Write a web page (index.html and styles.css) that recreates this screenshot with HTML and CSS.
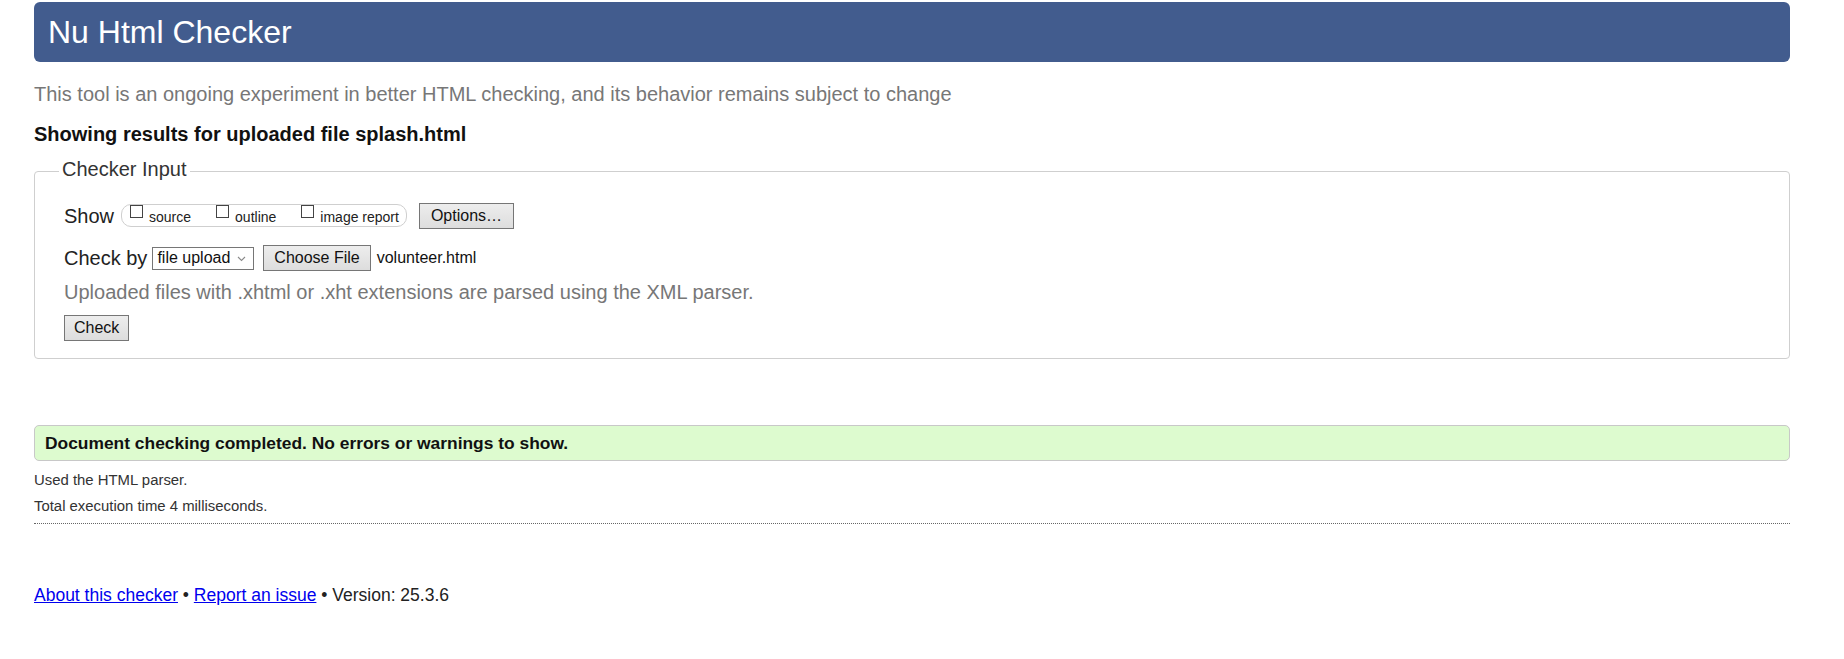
FILE: index.html
```html
<!DOCTYPE html>
<html lang="en">
<head>
<meta charset="utf-8">
<title>Nu Html Checker</title>
<link rel="stylesheet" href="styles.css">
</head>
<body>
<div class="page">
  <header class="banner"><h1>Nu Html Checker</h1></header>
  <p class="intro">This tool is an ongoing experiment in better HTML checking, and its behavior remains subject to change</p>
  <p class="showing">Showing results for uploaded file splash.html</p>

  <section class="panel">
    <span class="panel-title">Checker Input</span>
    <div class="row row-show">
      <span class="label">Show</span>
      <span class="show-box">
        <span class="opt"><span class="cb"></span>source</span>
        <span class="opt"><span class="cb"></span>outline</span>
        <span class="opt last"><span class="cb"></span>image report</span>
      </span>
      <span class="btn btn-options">Options…</span>
    </div>
    <div class="row row-check">
      <span class="label">Check by</span>
      <span class="select">file upload<svg class="chev" width="9" height="6" viewBox="0 0 9 6"><polyline points="1,1 4.5,4.5 8,1" fill="none" stroke="#8a8a8a" stroke-width="1.1"/></svg></span>
      <span class="btn btn-file">Choose File</span>
      <span class="filename">volunteer.html</span>
    </div>
    <p class="note">Uploaded files with .xhtml or .xht extensions are parsed using the XML parser.</p>
    <span class="btn btn-check">Check</span>
  </section>

  <p class="success">Document checking completed. No errors or warnings to show.</p>
  <p class="meta meta-first">Used the HTML parser.</p>
  <p class="meta">Total execution time 4 milliseconds.</p>
  <div class="rule"></div>

  <p class="footer"><a href="#">About this checker</a> • <a href="#">Report an issue</a> • Version: 25.3.6</p>
</div>
</body>
</html>
```

FILE: styles.css
```css
html, body {
  margin: 0;
  padding: 0;
  background: #fff;
}
body {
  font-family: "Liberation Sans", Arial, sans-serif;
  font-size: 20px;
  color: #222;
}
.page {
  margin: 2px 54px 0 34px;
}
.banner {
  background: #425c8e;
  border-radius: 6px;
  height: 60px;
  display: flex;
  align-items: center;
  padding-left: 14px;
}
.banner h1 {
  margin: 0;
  font-weight: normal;
  font-size: 32px;
  line-height: 36px;
  color: #fff;
}
.intro {
  margin: 21px 0 0;
  line-height: 23px;
  color: #777;
}
.showing {
  margin: 17px 0 0;
  line-height: 23px;
  font-weight: bold;
  color: #111;
}
.panel {
  position: relative;
  display: block;
  margin-top: 25px;
  border: 1px solid #cfcfcf;
  border-radius: 4px;
  padding: 31px 29px 17px;
}
.panel-title {
  position: absolute;
  top: -14px;
  left: 24px;
  background: #fff;
  padding: 0 3px;
  line-height: 23px;
  color: #333;
}
.row {
  display: flex;
  align-items: center;
  height: 26px;
}
.row-check {
  margin-top: 16px;
}
.label {
  color: #222;
}
.show-box {
  margin-left: 7px;
  height: 21px;
  border: 1px solid #cfcfcf;
  border-radius: 10px;
  padding: 0 7px 0 8px;
  font-size: 14px;
  line-height: 19px;
  display: flex;
  align-items: flex-start;
  color: #222;
  margin-top: -2px;
}
.opt {
  margin-right: 25px;
  white-space: nowrap;
}
.opt.last {
  margin-right: 0;
}
.cb {
  display: inline-block;
  width: 11px;
  height: 11px;
  border: 1px solid #444;
  background: #fff;
  margin: 0 6px 4px 0;
  vertical-align: baseline;
}
.btn {
  display: inline-flex;
  align-items: center;
  box-sizing: border-box;
  height: 26px;
  padding: 0 10px;
  font-size: 16px;
  color: #111;
  background: linear-gradient(#ededed, #dddddd);
  border: 1px solid #767676;
  white-space: nowrap;
}
.btn-options {
  margin-left: 12px;
  padding: 0 11px;
}
.select {
  margin-left: 5px;
  box-sizing: border-box;
  height: 23px;
  display: inline-flex;
  align-items: center;
  padding: 0 7px 0 4px;
  border: 1px solid #767676;
  background: #fff;
  font-size: 16px;
  color: #111;
}
.chev {
  margin-left: 7px;
  margin-top: 1px;
}
.btn-file {
  margin-left: 9px;
}
.filename {
  margin-left: 6px;
  font-size: 16px;
  color: #111;
}
.note {
  margin: 10px 0 0;
  line-height: 23px;
  color: #777;
}
.btn-check {
  margin-top: 11px;
  padding: 0 9px;
}
.success {
  margin: 66px 0 0;
  background: #ddfbcf;
  border: 1px solid #c8c8c8;
  border-radius: 5px;
  padding: 7px 10px;
  font-size: 17.4px;
  line-height: 20px;
  font-weight: bold;
  color: #111;
}
.meta {
  margin: 9px 0 0;
  font-size: 14.9px;
  line-height: 17px;
  color: #333;
}
.meta-first {
  margin-top: 11px;
}
.rule {
  margin-top: 8px;
  border-top: 1px dotted #666;
}
.footer {
  margin: 61px 0 0;
  font-size: 17.5px;
  line-height: 20px;
  color: #222;
}
.footer a {
  color: #0000ee;
  text-decoration: underline;
}
```
